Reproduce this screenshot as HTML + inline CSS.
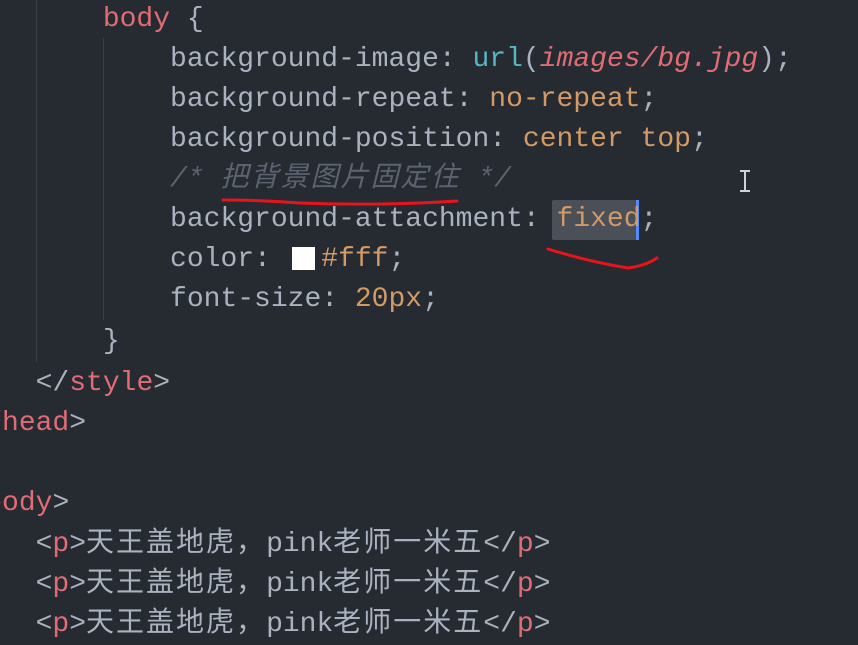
<!DOCTYPE html>
<html><head><meta charset="utf-8"><style>
html,body{margin:0;padding:0;}
body{width:858px;height:629px;overflow:hidden;background:#262a31;position:relative;
font-family:"Liberation Mono","Noto Sans CJK SC",monospace;font-size:28px;color:#abb2bf;}
.l{position:absolute;left:-31.6px;white-space:pre;height:40px;line-height:40px;}
.r{color:#e06c75}.c{color:#56b6c2}.o{color:#d19a66}.cm{color:#5c6370;font-style:italic}
.it{font-style:italic}
.k{letter-spacing:2px}
.g{position:absolute;width:1px;background:#3a3f48}
</style></head><body>
<div class="g" style="left:36px;top:0;height:362px"></div>
<div class="g" style="left:103px;top:38px;height:282px"></div>
<div style="position:absolute;left:552px;top:200px;width:85px;height:40px;background:#4a4f58;border-radius:2px"></div>
<div style="position:absolute;left:636px;top:200px;width:3px;height:40px;background:#528bff"></div>
<div style="position:absolute;left:292px;top:247px;width:23px;height:23px;background:#fff"></div>
<div class="l" style="top:0px">        <span class="r">body</span> {</div>
<div class="l" style="top:40px">            background-image: <span class="c">url</span>(<span class="r it">images/bg.jpg</span>);</div>
<div class="l" style="top:80px">            background-repeat: <span class="o">no-repeat</span>;</div>
<div class="l" style="top:120px">            background-position: <span class="o">center top</span>;</div>
<div class="l" style="top:160px">            <span class="cm">/* <span class="k">把背景图片固定住</span> */</span></div>
<div class="l" style="top:200px">            background-attachment: <span class="o">fixed</span>;</div>
<div class="l" style="top:240px">            color:   <span class="o">#fff</span>;</div>
<div class="l" style="top:280px">            font-size: <span class="o">20px</span>;</div>
<div class="l" style="top:322px">        }</div>
<div class="l" style="top:364px">    &lt;/<span class="r">style</span>&gt;</div>
<div class="l" style="top:404px">&lt;/<span class="r">head</span>&gt;</div>
<div class="l" style="top:484px">&lt;<span class="r">body</span>&gt;</div>
<div class="l" style="top:525px">    &lt;<span class="r">p</span>&gt;<span class="k">天王盖地虎，</span>pink<span class="k">老师一米五</span>&lt;/<span class="r">p</span>&gt;</div>
<div class="l" style="top:565px">    &lt;<span class="r">p</span>&gt;<span class="k">天王盖地虎，</span>pink<span class="k">老师一米五</span>&lt;/<span class="r">p</span>&gt;</div>
<div class="l" style="top:605px">    &lt;<span class="r">p</span>&gt;<span class="k">天王盖地虎，</span>pink<span class="k">老师一米五</span>&lt;/<span class="r">p</span>&gt;</div>
<svg style="position:absolute;left:0;top:0" width="858" height="629">
<path d="M223 200 Q260 200 300 203 Q380 206 457 201" stroke="#e8141c" stroke-width="3" fill="none" stroke-linecap="round"/>
<path d="M548 249 Q590 262 628 268 Q645 266 657 258" stroke="#e8141c" stroke-width="3" fill="none" stroke-linecap="round"/>
<path d="M740 171h10M745 171v20M740 191h10" stroke="#cfd3d8" stroke-width="2" fill="none"/>
</svg>
</body></html>
